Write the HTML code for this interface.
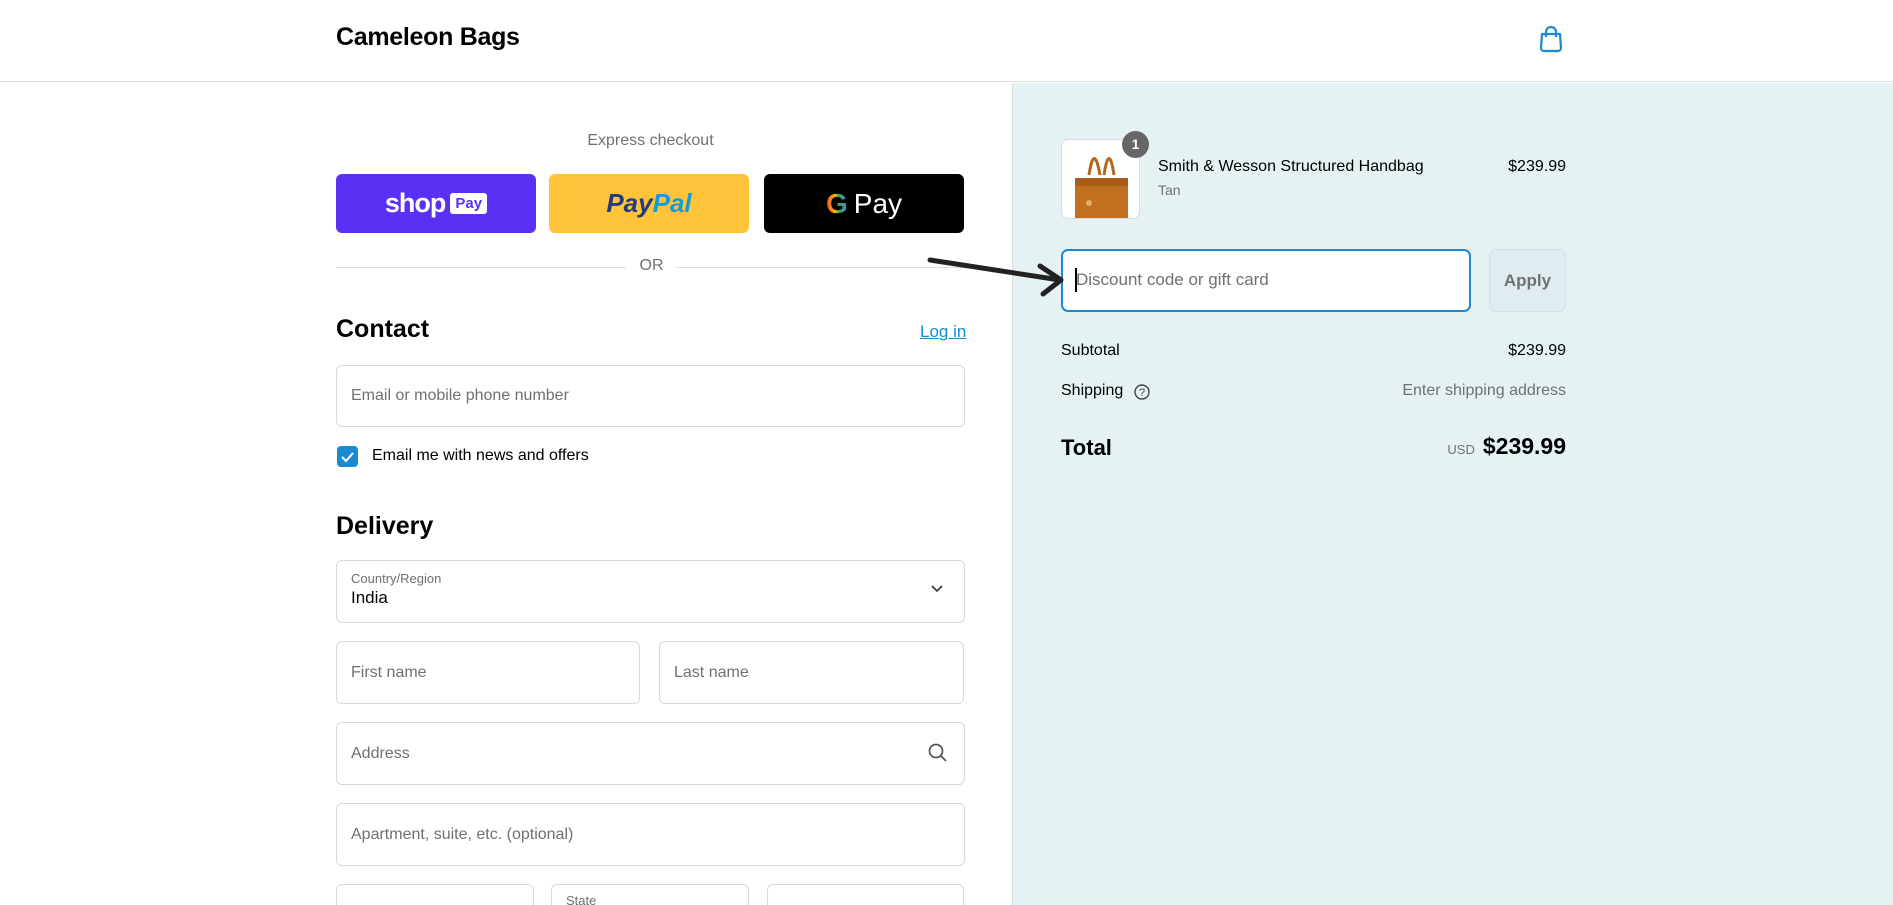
<!DOCTYPE html>
<html style="overflow:hidden;height:905px"><head><meta charset="utf-8"><style>
*{box-sizing:border-box;margin:0;padding:0}
body{width:1893px;height:905px;overflow:hidden;font-family:"Liberation Sans",sans-serif;background:#fff;color:#000}
#w{position:relative;width:1893px;height:905px;overflow:hidden}
.a{position:absolute}
.inp{position:absolute;border:1px solid #d9d9d9;border-radius:6px;background:#fff;font-size:16px;color:#707070;padding-left:14px;display:flex;align-items:center}
</style></head><body><div id="w">
<div class="a" style="left:0;top:0;width:1893px;height:82px;border-bottom:1px solid #dedede"></div>
<div class="a" style="left:336px;top:23px;font-size:25px;font-weight:bold;letter-spacing:-0.3px">Cameleon Bags</div>
<svg class="a" style="left:1538px;top:25px" width="26" height="28" viewBox="0 0 26 28"><path d="M4 9h18l1 14a3 3 0 0 1-3 3H6a3 3 0 0 1-3-3z" fill="none" stroke="#1a8ad0" stroke-width="2.2" stroke-linejoin="round"/><path d="M8 12V7a5 5 0 0 1 10 0v5" fill="none" stroke="#1a8ad0" stroke-width="2.2"/></svg>
<div class="a" style="left:1012px;top:83px;width:881px;height:822px;background:#e6f1f4;border-left:1px solid #dedede"></div>

<div class="a" style="left:336px;top:132px;width:629px;text-align:center;font-size:16px;color:#707070">Express checkout</div>
<div class="a" style="left:336px;top:174px;width:200px;height:59px;background:#5a31f4;border-radius:6px;color:#fff;display:flex;align-items:center;justify-content:center;gap:5px"><span style="font-size:27px;font-weight:bold;letter-spacing:-1px">shop</span><span style="background:#fff;color:#5a31f4;font-size:15px;font-weight:bold;border-radius:3px;padding:2px 5px">Pay</span></div>
<div class="a" style="left:549px;top:174px;width:200px;height:59px;background:#ffc439;border-radius:6px;display:flex;align-items:center;justify-content:center;font-size:26px;font-weight:bold;font-style:italic"><span style="color:#253b80">Pay</span><span style="color:#179bd7">Pal</span></div>
<div class="a" style="left:764px;top:174px;width:200px;height:59px;background:#000;border-radius:6px;display:flex;align-items:center;justify-content:center;color:#fff;font-size:28px;gap:6px"><span style="font-weight:bold;background:linear-gradient(90deg,#ea4335,#fbbc05 40%,#34a853 60%,#4285f4);-webkit-background-clip:text;color:transparent">G</span><span>Pay</span></div>
<div class="a" style="left:336px;top:267px;width:290px;height:1px;background:#dedede"></div>
<div class="a" style="left:677px;top:267px;width:288px;height:1px;background:#dedede"></div>
<div class="a" style="left:626px;top:257px;width:51px;text-align:center;font-size:16px;color:#707070">OR</div>

<div class="a" style="left:336px;top:315px;font-size:25px;font-weight:bold">Contact</div>
<div class="a" style="left:920px;top:322px;font-size:17px;color:#1a8ad0;text-decoration:underline">Log in</div>
<div class="inp" style="left:336px;top:365px;width:629px;height:62px">Email or mobile phone number</div>
<div class="a" style="left:337px;top:446px;width:21px;height:21px;background:#1a8ad0;border-radius:4px"><svg width="21" height="21"><path d="M5 11l4 4 7-8" fill="none" stroke="#fff" stroke-width="2"/></svg></div>
<div class="a" style="left:372px;top:447px;font-size:16px">Email me with news and offers</div>

<div class="a" style="left:336px;top:512px;font-size:25px;font-weight:bold">Delivery</div>
<div class="inp" style="left:336px;top:560px;width:629px;height:63px;display:block;padding-top:10px"><div style="font-size:13px">Country/Region</div><div style="font-size:17px;color:#000;margin-top:2px">India</div></div>
<svg class="a" style="left:930px;top:584px" width="14" height="10"><path d="M2 2l5 5 5-5" fill="none" stroke="#333" stroke-width="1.6"/></svg>
<div class="inp" style="left:336px;top:641px;width:304px;height:63px">First name</div>
<div class="inp" style="left:659px;top:641px;width:305px;height:63px">Last name</div>
<div class="inp" style="left:336px;top:722px;width:629px;height:63px">Address</div>
<svg class="a" style="left:927px;top:742px" width="22" height="22"><circle cx="9" cy="9" r="6.5" fill="none" stroke="#555" stroke-width="1.7"/><path d="M14 14l5 5" stroke="#555" stroke-width="1.8"/></svg>
<div class="inp" style="left:336px;top:803px;width:629px;height:63px">Apartment, suite, etc. (optional)</div>
<div class="inp" style="left:336px;top:884px;width:198px;height:63px"></div>
<div class="inp" style="left:551px;top:884px;width:198px;height:63px;align-items:flex-start;padding-top:8px;font-size:13px">State</div>
<div class="inp" style="left:767px;top:884px;width:197px;height:63px"></div>

<div class="a" style="left:1061px;top:139px;width:79px;height:80px;border:1px solid #d0dde1;border-radius:7px;background:#fff;overflow:hidden">
<svg width="79" height="80"><path d="M27 35 Q32 2 38 35 M42 35 Q47 2 52 35" fill="none" stroke="#b5651d" stroke-width="3"/><rect x="13" y="38" width="53" height="41" fill="#c0701f"/><rect x="13" y="38" width="53" height="8" fill="#a85e18"/><circle cx="27" cy="63" r="3" fill="#e0b060"/></svg></div>
<div class="a" style="left:1122px;top:131px;width:27px;height:27px;border-radius:50%;background:#666;color:#fff;font-size:14px;font-weight:bold;text-align:center;line-height:27px">1</div>
<div class="a" style="left:1158px;top:158px;font-size:16px;color:#000">Smith &amp; Wesson Structured Handbag</div>
<div class="a" style="left:1158px;top:182px;font-size:14px;color:#707070">Tan</div>
<div class="a" style="left:1400px;top:158px;width:166px;text-align:right;font-size:16px">$239.99</div>

<div class="a" style="left:1061px;top:249px;width:410px;height:63px;border:2px solid #1a8ad0;border-radius:7px;background:#fff"></div>
<div class="a" style="left:1075px;top:268px;width:2px;height:24px;background:#000"></div>
<div class="a" style="left:1076px;top:270px;font-size:17px;color:#707070">Discount code or gift card</div>
<div class="a" style="left:1489px;top:249px;width:77px;height:63px;border:1px solid #d3e0e4;border-radius:7px;background:#e1ecf0;color:#707070;font-size:17px;font-weight:bold;text-align:center;line-height:61px">Apply</div>
<svg class="a" style="left:920px;top:250px" width="150" height="50"><path d="M10 10 L140 30 M120 16 L141 30 L123 44" fill="none" stroke="#222" stroke-width="5" stroke-linecap="round" stroke-linejoin="round"/></svg>

<div class="a" style="left:1061px;top:342px;font-size:16px">Subtotal</div>
<div class="a" style="left:1400px;top:342px;width:166px;text-align:right;font-size:16px">$239.99</div>
<div class="a" style="left:1061px;top:382px;font-size:16px">Shipping</div>
<svg class="a" style="left:1133px;top:383px" width="18" height="18"><circle cx="9" cy="9" r="7" fill="none" stroke="#444" stroke-width="1.4"/><text x="9" y="13" font-size="11" text-anchor="middle" fill="#444" font-family="Liberation Sans">?</text></svg>
<div class="a" style="left:1300px;top:382px;width:266px;text-align:right;font-size:16px;color:#707070">Enter shipping address</div>
<div class="a" style="left:1061px;top:435px;font-size:22px;font-weight:bold">Total</div>
<div class="a" style="left:1300px;top:433px;width:266px;text-align:right"><span style="font-size:13px;color:#707070;margin-right:8px">USD</span><span style="font-size:23px;font-weight:bold">$239.99</span></div>
</div></body></html>
